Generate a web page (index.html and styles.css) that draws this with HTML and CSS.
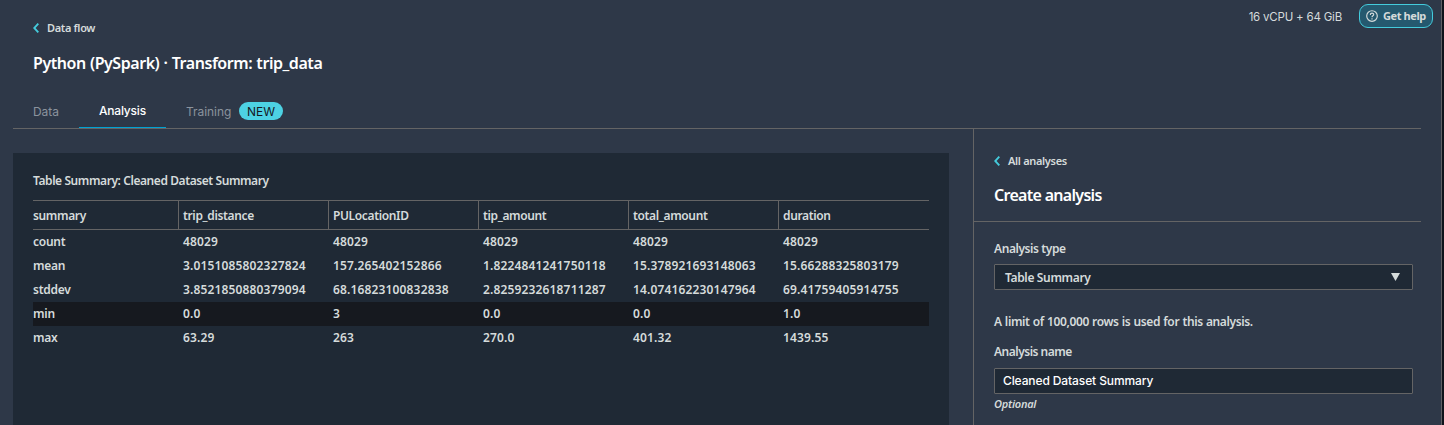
FILE: index.html
```html
<!DOCTYPE html>
<html lang="en">
<head>
<meta charset="utf-8">
<title>Data flow analysis</title>
<link rel="stylesheet" href="styles.css">
</head>
<body>
<div class="app">
  <header class="header">
    <div class="heading">
      <a class="back"><svg class="chevron" width="7" height="10" viewBox="0 0 7 10"><path d="M5.3 .7 1.2 5l4.1 4.3"/></svg><span>Data flow</span></a>
      <h1 class="title">Python (PySpark) · Transform: trip_data</h1>
    </div>
    <div class="tools">
      <span class="capacity">16 vCPU + 64 GiB</span>
      <button class="help"><svg width="12" height="12" viewBox="0 0 12 12"><circle cx="6" cy="6" r="5.3"/><path d="M4.3 4.9C4.3 2.6 7.8 2.7 7.7 4.7 7.6 5.9 6 5.8 6 7.2M6 8.2v1.2"/></svg><span>Get help</span></button>
    </div>
  </header>
  <nav class="tabs">
    <span class="data">Data</span>
    <span class="active">Analysis</span>
    <span class="training">Training</span><span class="badge">NEW</span>
  </nav>
  <main class="content">
    <section class="results">
      <h2 class="results-title">Table Summary: Cleaned Dataset Summary</h2>
      <div class="table">
        <div class="row head"><span>summary</span><span>trip_distance</span><span>PULocationID</span><span>tip_amount</span><span>total_amount</span><span>duration</span></div>
        <div class="row"><span>count</span><span>48029</span><span>48029</span><span>48029</span><span>48029</span><span>48029</span></div>
        <div class="row"><span>mean</span><span>3.0151085802327824</span><span>157.265402152866</span><span>1.8224841241750118</span><span>15.378921693148063</span><span>15.66288325803179</span></div>
        <div class="row"><span>stddev</span><span>3.8521850880379094</span><span>68.16823100832838</span><span>2.8259232618711287</span><span>14.074162230147964</span><span>69.41759405914755</span></div>
        <div class="row hovered"><span>min</span><span>0.0</span><span>3</span><span>0.0</span><span>0.0</span><span>1.0</span></div>
        <div class="row"><span>max</span><span>63.29</span><span>263</span><span>270.0</span><span>401.32</span><span>1439.55</span></div>
      </div>
    </section>
    <aside class="side">
      <div class="side-head">
        <a class="back"><svg class="chevron" width="7" height="10" viewBox="0 0 7 10"><path d="M5.3 .7 1.2 5l4.1 4.3"/></svg><span>All analyses</span></a>
        <h2 class="side-title">Create analysis</h2>
      </div>
      <div class="form">
        <div class="label">Analysis type</div>
        <div class="field select"><span>Table Summary</span><svg width="9" height="8" viewBox="0 0 9 8"><path d="M0 0h9L4.5 8z"/></svg></div>
        <p class="note">A limit of 100,000 rows is used for this analysis.</p>
        <div class="label name">Analysis name</div>
        <div class="field input"><span>Cleaned Dataset Summary</span></div>
        <div class="hint">Optional</div>
      </div>
    </aside>
  </main>
</div>
</body>
</html>
```
FILE: styles.css
```css
* { box-sizing: border-box; }
body { margin: 0; background: #0f141c; color: #d5dbdb; font: 600 12px/16px "Noto Sans", sans-serif; letter-spacing: -.42px; overflow: hidden; }
h1, h2, p { margin: 0; }
.app { width: 1442px; height: 425px; background: #2e3848; border-right: 1px solid #5f6065; display: flex; flex-direction: column; }
.header { display: flex; justify-content: space-between; height: 97px; padding: 0 8px 0 33px; }
.heading { padding-top: 20px; }
.back { display: flex; align-items: center; gap: 7px; height: 16px; font-size: 11px; letter-spacing: -.33px; }
.chevron { fill: none; stroke: #44cbdc; stroke-width: 1.9; }
.title { margin-top: 16px; color: #fff; font-size: 16px; line-height: 22px; font-weight: 600; letter-spacing: -.45px; word-spacing: .5px; white-space: nowrap; }
.tools { display: flex; gap: 17px; padding-top: 4px; }
.capacity { font: 400 11.5px/26px Inter, sans-serif; letter-spacing: -.2px; }
.help { display: flex; align-items: center; gap: 5px; width: 74px; height: 24px; padding: 0 6px; border: 1px solid #44cbdc; border-radius: 9px; background: #25596f; color: #d5dbdb; font: 700 11px/16px "Noto Sans", sans-serif; letter-spacing: -.4px; white-space: nowrap; }
.help svg { fill: none; stroke: #d5dbdb; stroke-width: 1.15; flex: none; }
.tabs { display: flex; height: 32px; margin: 0 20px 0 13px; padding-left: 20px; border-bottom: 1px solid #646465; font: 400 12px/29px Inter, sans-serif; letter-spacing: -.05px; color: #8b939d; }
.data { width: 46px; }
.active { width: 87px; height: 31px; padding-left: 20px; border-bottom: 1px solid #00a1d2; color: #fff; font-weight: 500; line-height: 28px; letter-spacing: -.2px; }
.training { margin-left: 20px; width: 45px; }
.badge { margin: 5px 0 0 8px; width: 44px; height: 18px; border-radius: 9px; background: #4dd2e3; color: #16191f; line-height: 19px; text-align: center; }
.content { display: flex; flex: 1; padding: 0 20px 0 13px; }
.results { width: 936px; margin: 24px 24px 0 0; padding: 20px 20px 0; background: #1f2935; }
.results-title { font: inherit; }
.table { margin-top: 11px; }
.row { display: grid; grid-template-columns: 146px repeat(5, 150px); height: 24px; line-height: 24px; }
.row span:first-child { letter-spacing: -.25px; }
.row span + span { padding-left: 4px; letter-spacing: .15px; }
.row.head { height: 30px; line-height: 29px; border: solid #646465; border-width: 1px 0; }
.row.head span { border-right: 1px solid #646465; letter-spacing: -.36px; }
.row.head span:last-child { border-right: 0; }
.hovered { background: #16191f; }
.side { flex: 1; border-left: 1px solid #646465; }
.side-head { height: 93px; padding: 24px 20px 0; border-bottom: 1px solid #646465; }
.side-title { margin-top: 15px; color: #fff; font-size: 16px; line-height: 22px; font-weight: 600; letter-spacing: -.7px; }
.form { padding: 19px 8px 0 20px; }
.field { display: flex; align-items: center; height: 26px; border: 1px solid #646465; border-radius: 1px; background: #1f2935; }
.select { margin-top: 7px; padding: 1px 12px 0 10px; justify-content: space-between; letter-spacing: -.35px; }
.select svg { fill: #d5dbdb; margin-top: -2px; }
.note { margin-top: 24px; letter-spacing: -.38px; word-spacing: .45px; }
.name { margin-top: 14px; letter-spacing: -.5px; }
.input { margin-top: 8px; padding-left: 8px; color: #fff; font: 500 12px/24px Inter, sans-serif; letter-spacing: -.11px; }
.hint { margin-top: 2px; font-size: 11px; font-style: italic; letter-spacing: -.25px; }
```
